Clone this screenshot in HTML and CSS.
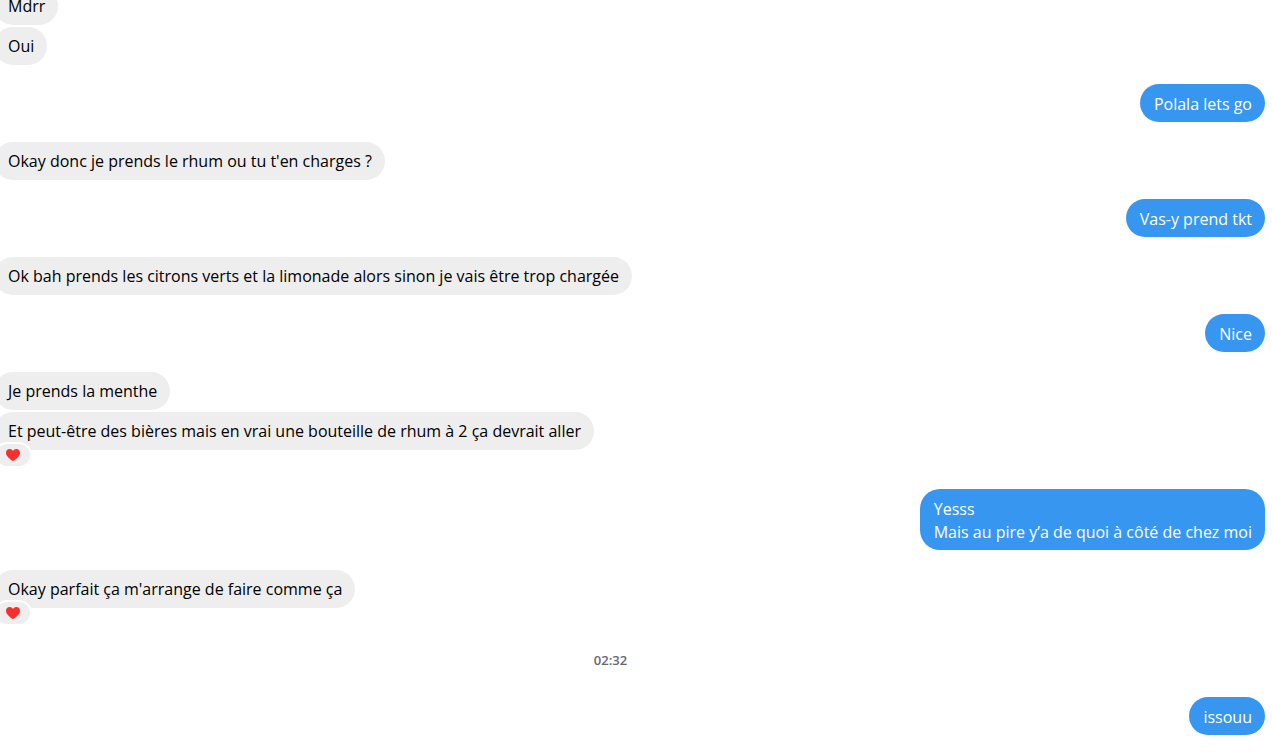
FILE: index.html
```html
<!DOCTYPE html>
<html lang="fr">
<head>
    <meta charset="UTF-8">
    <meta name="viewport" content="width=device-width, initial-scale=1.0">
    <title>Conversation</title>
    <link rel="stylesheet" href="styles.css">
</head>
<body>
    <svg class="sprite" aria-hidden="true">
        <symbol id="heart" viewBox="0 0 14 12">
            <path fill="#fc2d2d" d="M7 12C6 11.4 0 7.800 0 3.900C0 1.500 1.600 0 3.700 0C5.200 0 6.400.8 7 2C7.600.8 8.800 0 10.300 0C12.400 0 14 1.500 14 3.900C14 7.800 8 11.400 7 12Z"/>
        </symbol>
    </svg>

    <main class="chat">
        <div class="group received">
            <div class="bubble">Mdrr</div>
            <div class="bubble">Oui</div>
        </div>
        <div class="group sent">
            <div class="bubble">Polala lets go</div>
        </div>
        <div class="group received">
            <div class="bubble">Okay donc je prends le rhum ou tu t'en charges ?</div>
        </div>
        <div class="group sent">
            <div class="bubble">Vas-y prend tkt</div>
        </div>
        <div class="group received">
            <div class="bubble">Ok bah prends les citrons verts et la limonade alors sinon je vais être trop chargée</div>
        </div>
        <div class="group sent">
            <div class="bubble">Nice</div>
        </div>
        <div class="group received reacted">
            <div class="bubble">Je prends la menthe</div>
            <div class="bubble">
                Et peut-être des bières mais en vrai une bouteille de rhum à 2 ça devrait aller
                <span class="reaction"><svg class="heart"><use href="#heart"/></svg></span>
            </div>
        </div>
        <div class="group sent">
            <div class="bubble">Yesss<br>Mais au pire y’a de quoi à côté de chez moi</div>
        </div>
        <div class="group received reacted">
            <div class="bubble">
                Okay parfait ça m'arrange de faire comme ça
                <span class="reaction"><svg class="heart"><use href="#heart"/></svg></span>
            </div>
        </div>
        <time class="time">02:32</time>
        <div class="group sent">
            <div class="bubble">issouu</div>
        </div>
    </main>
</body>
</html>
```

FILE: styles.css
```css
body {
    margin: 0;
    overflow: hidden;
    background-color: #fff;
    color: #000;
    font-family: "Open Sans", "Noto Sans", sans-serif;
    font-size: 16px;
    line-height: 23px;
}
.sprite {
    display: none;
}
/* the thread is scrolled: its top and its avatar gutter are out of view */
.chat {
    display: flex;
    flex-direction: column;
    margin: -13px 7px 0 -44px;
}
.group {
    display: flex;
    flex-direction: column;
    gap: 2px;
}
.received {
    align-items: flex-start;
    padding-left: 38px;
    margin-bottom: 19px;
}
.sent {
    align-items: flex-end;
    margin-bottom: 20px;
}
.reacted {
    margin-bottom: 39px;
}
.bubble {
    position: relative;
    padding: 8px 13px 7px 14px;
    border-radius: 20px;
}
.received .bubble {
    background-color: #eee;
}
.sent .bubble {
    padding: 9px 13px 6px 14px;
    background-color: #3796f0;
    color: #fff;
}
.reaction {
    position: absolute;
    left: 0;
    bottom: -18px;
    display: flex;
    padding: 5px 10px;
    border: 2px solid #fff;
    border-radius: 14px;
    background-color: #eee;
}
.heart {
    width: 14px;
    height: 12px;
}
.time {
    margin: 2px 0 25px;
    color: #65676b;
    font-size: 13px;
    font-weight: 600;
    text-align: center;
}
```
